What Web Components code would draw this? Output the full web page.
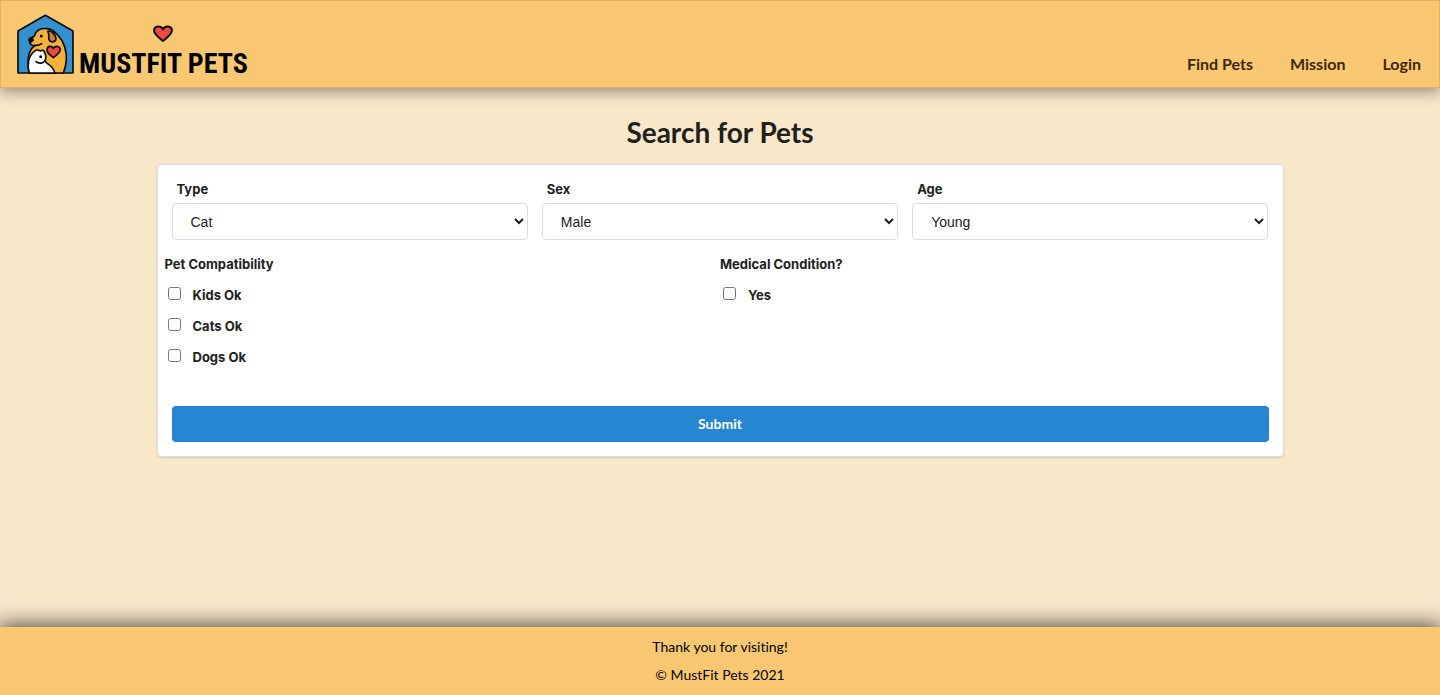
<!DOCTYPE html>
<html lang="en">
<head>
<meta charset="utf-8">
<meta name="viewport" content="width=device-width, initial-scale=1">
<title>MustFit Pets</title>
<style>
  body { margin: 0; background: #f8e7c9; font-family: Lato, "Liberation Sans", sans-serif; font-variant-ligatures: none; }
</style>
</head>
<body>
<pets-app>
  <site-header slot="header">
    <nav-link href="#find">Find Pets</nav-link>
    <nav-link href="#mission">Mission</nav-link>
    <nav-link href="#login">Login</nav-link>
  </site-header>
  <pet-search heading="Search for Pets"></pet-search>
  <site-footer slot="footer">
    <p>Thank you for visiting!</p>
    <p>© MustFit Pets 2021</p>
  </site-footer>
</pets-app>

<script>
class Base extends HTMLElement {
  constructor() {
    super();
    this.attachShadow({ mode: "open" });
  }
  connectedCallback() {
    this.shadowRoot.innerHTML = `<style>*{box-sizing:border-box}</style>` + this.render();
  }
}

customElements.define("pets-app", class extends Base {
  render() {
    return `<style>
      :host { display: flex; flex-direction: column; min-height: 100vh; }
      main { flex: 1; padding: 27px 16px; }
    </style>
    <slot name="header"></slot>
    <main><slot></slot></main>
    <slot name="footer"></slot>`;
  }
});

customElements.define("site-logo", class extends Base {
  render() {
    return `<style>
      :host { display: block; }
      a { display: flex; align-items: flex-end; gap: 5px; color: #000; text-decoration: none; }
      .house { display: block; width: 57px; height: 60px; }
      .word { position: relative; white-space: nowrap; font: bold 28px/20px "Liberation Sans Narrow", "Roboto Condensed", Roboto, sans-serif; }
      .heart { position: absolute; left: 73px; bottom: 31px; width: 22px; height: 18px; }
    </style>
    <a href="#home">
      <svg class="house" viewBox="51 42 171 180" aria-hidden="true" stroke="#0b0b0b" stroke-width="5" stroke-linejoin="round" stroke-linecap="round">
        <path d="M54 93 136 46 219 93V219H54Z" fill="#3490cf"/>
        <path d="M95 219C78 190 82 155 104 137C96 138 88 132 88 121C92 114 99 112 104 107C108 91 122 84 139 86C151 85 163 93 173 105C192 124 201 155 199 180C198 197 194 209 190 219Z" fill="#f6b13c"/>
        <path d="M87 121C87 115 91 113 97 113L99 121 92 126Z" fill="#0b0b0b"/>
        <path d="M104 136C112 137 119 135 125 131" fill="none"/>
        <path d="M143 94C154 91 166 101 168 116C167 128 151 129 147 119C144 109 150 105 143 94Z" fill="#c58332"/>
        <path d="M88 219C80 195 84 166 107 151C113 148 117 152 121 153C127 149 132 151 133 156C138 165 139 174 135 182C139 194 160 195 164 219Z" fill="#fff"/>
        <path d="M108 185C117 193 131 190 136 180" fill="none"/>
        <path d="M160 173C147 163 140 157 141 148C143 137 155 136 160 145C166 136 178 138 181 147C181 157 171 165 160 173Z" fill="#ee4a43"/>
        <circle cx="124" cy="108" r="2" fill="#0b0b0b"/>
        <circle cx="122" cy="170" r="2" fill="#0b0b0b"/>
      </svg>
      <span class="word">MUSTFIT PETS
        <svg class="heart" viewBox="0 0 66 54" aria-hidden="true"><path d="M33 48C20 38 6 28 6 16C8 2 26 1 33 13C40 1 58 2 60 16C60 28 46 38 33 48Z" fill="#ee4a43" stroke="#0b0b0b" stroke-width="6" stroke-linejoin="round"/></svg>
      </span>
    </a>`;
  }
});

customElements.define("site-header", class extends Base {
  render() {
    return `<style>
      :host { display: block; position: relative; }
      header { display: flex; justify-content: space-between; align-items: flex-end; padding: 13px 18px 13px 16px; background: #fac873; border: 1px solid #e0b060; box-shadow: 0 5px 12px rgba(0,0,0,.35); }
      nav { display: flex; gap: 37px; }
    </style>
    <header><site-logo></site-logo><nav aria-label="Main"><slot></slot></nav></header>`;
  }
});

customElements.define("nav-link", class extends Base {
  render() {
    return `<style>
      :host { display: block; }
      a { display: block; color: #3e270b; text-decoration: none; font-weight: bold; font-size: 16px; line-height: 20px; }
    </style>
    <a href="${this.getAttribute("href")}"><slot></slot></a>`;
  }
});

customElements.define("site-footer", class extends Base {
  render() {
    return `<style>
      :host { display: block; position: relative; }
      footer { display: flex; flex-direction: column; gap: 8px; padding: 10px 16px; text-align: center; background: #fac873; color: #000; font-size: 14px; line-height: 20px; box-shadow: 0 0 20px 2px rgba(0,0,0,.7); }
      ::slotted(p) { margin: 0; }
    </style>
    <footer><slot></slot></footer>`;
  }
});

customElements.define("select-field", class extends Base {
  render() {
    const options = this.getAttribute("options").split(",").map(o => `<option>${o}</option>`).join("");
    return `<style>
      :host { display: block; flex: 1; min-width: 0; }
      label { display: block; padding: 0 5px; margin-bottom: 5px; font: bold 13px/18px Inter, sans-serif; color: #212121; }
      select { display: block; width: 100%; height: 37px; padding: 0 0 0 14px; border: 1px solid #dcdddd; border-radius: 4px; background: #fff; color: #212121; font: 14px "Liberation Sans", sans-serif; }
    </style>
    <label for="field">${this.getAttribute("label")}</label>
    <select id="field">${options}</select>`;
  }
});

customElements.define("check-field", class extends Base {
  render() {
    return `<style>
      :host { display: block; }
      label { display: flex; align-items: center; gap: 12px; font: bold 13px/31px Inter, sans-serif; color: #212121; }
      input { width: 13px; height: 13px; margin: 0 0 4px 3px; }
    </style>
    <label><input type="checkbox"><slot></slot></label>`;
  }
});

customElements.define("check-group", class extends Base {
  render() {
    return `<style>
      :host { display: block; flex: 1; }
      fieldset { margin: 0; padding: 0; border: 0; }
      legend { padding: 0; font: bold 13px/31px Inter, sans-serif; color: #212121; }
    </style>
    <fieldset><legend>${this.getAttribute("label")}</legend><slot></slot></fieldset>`;
  }
});

customElements.define("pet-search", class extends Base {
  render() {
    return `<style>
      :host { display: block; max-width: 1127px; margin: 0 auto; }
      h1 { margin: 0 0 15px; text-align: center; font-weight: bold; font-size: 28px; line-height: 34px; color: #21211c; }
      form { padding: 15px 7px 14px; background: #fff; border: 1px solid #dcdddd; border-radius: 4px; box-shadow: 0 1px 2px rgba(34,36,38,.15); }
      .selects { display: flex; gap: 14px; padding: 0 7px; margin-bottom: 9px; }
      .checks { display: flex; margin-bottom: 33px; }
      .actions { padding: 0 7px; }
      button { display: block; width: 100%; height: 36px; border: 0; border-radius: 4px; background: #2686d1; color: #fff; font: bold 14px/18px Lato, sans-serif; cursor: pointer; }
    </style>
    <h1>${this.getAttribute("heading")}</h1>
    <form>
      <div class="selects">
        <select-field label="Type" options="Cat,Dog"></select-field>
        <select-field label="Sex" options="Male,Female"></select-field>
        <select-field label="Age" options="Young,Adult,Senior"></select-field>
      </div>
      <div class="checks">
        <check-group label="Pet Compatibility">
          <check-field>Kids Ok</check-field>
          <check-field>Cats Ok</check-field>
          <check-field>Dogs Ok</check-field>
        </check-group>
        <check-group label="Medical Condition?">
          <check-field>Yes</check-field>
        </check-group>
      </div>
      <div class="actions"><button type="submit">Submit</button></div>
    </form>`;
  }
});
</script>
</body>
</html>
